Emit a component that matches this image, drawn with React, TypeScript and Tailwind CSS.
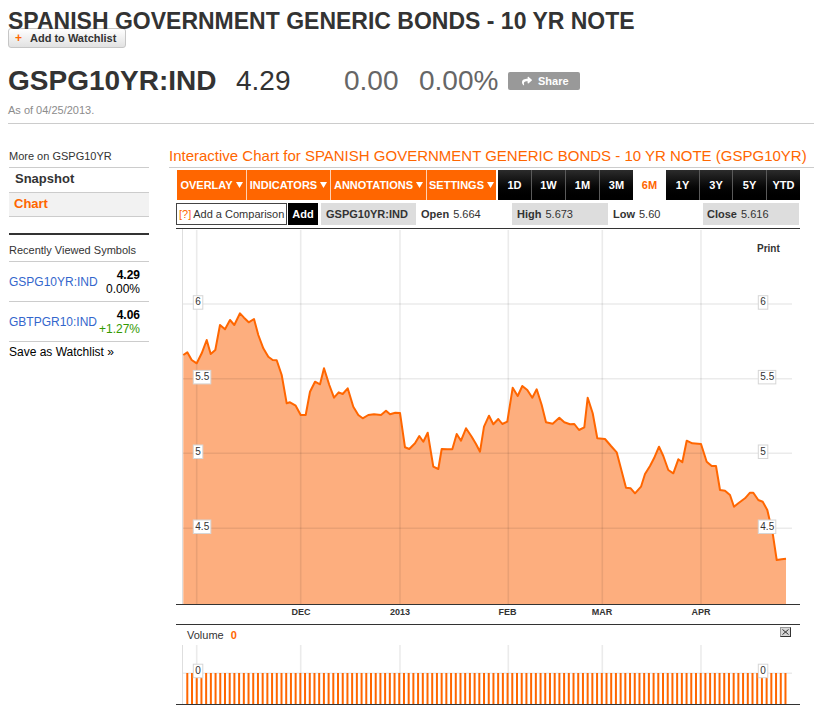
import React from "react";
import { FaShare } from "react-icons/fa";

// price series traced from the 6M chart, in page pixels
const pts: [number, number][] = [
  [183.3, 355], [187.3, 352.3], [191.7, 360], [196.7, 363.3], [201.7, 353.3], [206.7, 340],
  [210.7, 354], [215.3, 350], [220, 325], [225, 329.3], [230, 320], [234.3, 325], [240, 313.3],
  [244, 317.7], [248.7, 322.3], [254, 319], [258.3, 335], [263.3, 348.3], [268.3, 356.7],
  [272.7, 360], [276.7, 360.3], [281.7, 375], [286.7, 403.3], [290, 402.3], [295.7, 405.7],
  [300.7, 415], [305.7, 415], [310, 391.7], [315, 381.7], [320, 384.3], [324, 368.3], [329.3, 385],
  [334, 397.7], [338.7, 392.3], [342.7, 394], [347.7, 388.3], [353.3, 406.7], [358.3, 415],
  [362.7, 418.3], [368.3, 415], [374, 414.3], [381, 415], [386, 410.7], [390, 414.3],
  [395.3, 412.7], [400, 413], [405, 447.3], [409.3, 449], [415, 443.3], [419.3, 436],
  [423.3, 441.7], [427.7, 432.7], [433.3, 466.7], [438.3, 469], [441.7, 449], [447.3, 449.3],
  [452.3, 449.3], [456.7, 434], [461, 440.7], [466, 428.3], [471.7, 436.7], [476, 444],
  [480, 451.7], [484, 426.7], [489, 415.7], [493.3, 424.3], [498.3, 419], [502.3, 424],
  [507.3, 421.7], [512.7, 387.7], [517.7, 396], [522.3, 386], [527.3, 390], [532.3, 397.7],
  [536.7, 389.3], [541.7, 405], [546, 422.3], [552.7, 423.7], [559.3, 417.7], [564.3, 422.3],
  [570, 424.3], [574.3, 424], [579, 430], [584.3, 427.3], [587.7, 397.7], [592.7, 413.3],
  [597.3, 438.3], [605, 439], [611, 446], [616.7, 452.3], [626, 487.7], [630.7, 488.3],
  [635, 493.3], [641, 486.7], [645, 474], [650, 466], [654, 458.3], [659, 446.7], [663.3, 456],
  [668.3, 470], [673.3, 473.3], [678.3, 459.3], [682.3, 462.3], [686.7, 440.7], [692.3, 443.3],
  [701, 444], [706.7, 461.7], [711.7, 466], [716, 466], [720, 490], [725, 490.7], [730, 495],
  [734, 506.7], [738.3, 503.3], [745, 498.3], [750, 492.7], [753.3, 492.7], [758.3, 500],
  [762.7, 501.7], [767.3, 510], [772.7, 533.3], [776.7, 560], [781.7, 559.3], [786, 558.7],
];
const line = pts.map(([x, y]) => `${x},${y}`).join(" ");

const vGrid = [196.7, 300.7, 400, 508.3, 602.3, 701];
const hGrid = [
  { y: 304, label: "6" },
  { y: 378.7, label: "5.5" },
  { y: 453.3, label: "5" },
  { y: 528.3, label: "4.5" },
];
const months = [
  { x: 301, label: "DEC" },
  { x: 400, label: "2013" },
  { x: 507.5, label: "FEB" },
  { x: 602, label: "MAR" },
  { x: 701, label: "APR" },
];
const bars = Array.from({ length: 128 }, (_, i) => 186.3 + i * 4.71);

const orangeBtns = [
  { label: "OVERLAY", cls: "w-[69px]" },
  { label: "INDICATORS", cls: "w-[84px] border-l border-white/70" },
  { label: "ANNOTATIONS", cls: "w-[96px] border-l border-white/70" },
  { label: "SETTINGS", cls: "w-[70px] border-l border-white/70" },
];
const ranges = [
  { label: "1D", cls: "w-[33px]" },
  { label: "1W", cls: "w-[34px] border-l border-[#5a5a5a]" },
  { label: "1M", cls: "w-[34px] border-l border-[#5a5a5a]" },
  { label: "3M", cls: "w-[34px] border-l border-[#5a5a5a]" },
  { label: "6M", cls: "w-[33px]", active: true },
  { label: "1Y", cls: "w-[33px]" },
  { label: "3Y", cls: "w-[33px] border-l border-[#5a5a5a]" },
  { label: "5Y", cls: "w-[34px] border-l border-[#5a5a5a]" },
  { label: "YTD", cls: "w-[34px] border-l border-[#5a5a5a]" },
];

const svgFont = "Liberation Sans, Arial, sans-serif";

function Tag({ x, y, text }: { x: number; y: number; text: string }) {
  const w = text.length > 1 ? 17.5 : 9.5;
  return (
    <g>
      <rect x={x} y={y - 8.3} width={w} height={13.5} fill="#fff" stroke="#d6d6d6" />
      <text x={x + 2} y={y + 1.3} fontSize={10} fill="#333" fontFamily={svgFont}>
        {text}
      </text>
    </g>
  );
}

function Caret() {
  return (
    <svg width="7" height="6" viewBox="0 0 7 6" className="ml-[3px]">
      <path d="M0 0H7L3.5 6Z" fill="#fff" />
    </svg>
  );
}

export default function App() {
  return (
    <div className="w-[814px] h-[710px] overflow-hidden bg-white text-[#333] font-['Liberation_Sans',Arial,sans-serif]">
      {/* header */}
      <div className="pl-[8px]">
        <h1 className="pt-[14px] text-[23px] leading-[15px] font-bold whitespace-nowrap">
          SPANISH GOVERNMENT GENERIC BONDS - 10 YR NOTE
        </h1>
        <button className="-mt-[1px] flex items-center h-[20px] w-[118px] pl-[6px] rounded-[3px] border border-[#c6c6c6] bg-linear-to-b from-white to-[#e2e2e2] text-[11px] font-bold text-[#333]">
          <span className="w-[15px] text-left text-[12px] text-[#ff6600]">+</span>
          Add to Watchlist
        </button>
        <div className="mt-[18px] flex items-center h-[30px] text-[28px] leading-[30px] whitespace-nowrap">
          <span className="w-[228px] font-bold">GSPG10YR:IND</span>
          <span className="w-[108px]">4.29</span>
          <span className="w-[75px] text-[#666]">0.00</span>
          <span className="w-[89px] text-[#666]">0.00%</span>
          <span className="flex items-center h-[18px] w-[72px] pl-[14px] gap-[6px] rounded-[2px] bg-[#999] text-white text-[11px] leading-[18px] font-bold">
            <FaShare size={10} />
            Share
          </span>
        </div>
        <div className="mt-[8px] pb-[6px] border-b border-[#ccc] text-[11px] leading-[13px] text-[#8c8c8c]">
          As of 04/25/2013.
        </div>
      </div>

      <div className="flex">
        {/* sidebar */}
        <div className="ml-[9px] w-[140px] shrink-0">
          <div className="mt-[26px] pb-[4px] border-b border-[#ccc] text-[11px] leading-[13px]">More on GSPG10YR</div>
          <div className="h-[25px] pl-[6px] border-b border-[#ccc] text-[13px] leading-[22px] font-bold">Snapshot</div>
          <div className="h-[24px] pl-[5px] border-b border-[#ccc] bg-[#f2f2f2] text-[13px] leading-[22px] font-bold text-[#ff6600]">
            Chart
          </div>
          <div className="mt-[16px] border-t-2 border-[#333]" />
          <div className="mt-[9px] pb-[4px] border-b border-[#ccc] text-[11px] leading-[13px]">Recently Viewed Symbols</div>
          <div className="h-[40px] flex items-center justify-between pr-[9px] border-b border-[#ccc]">
            <span className="text-[12px] leading-[14px] text-[#3366cc]">GSPG10YR:IND</span>
            <div className="text-right text-[12px] leading-[14px]">
              <div className="font-bold text-black">4.29</div>
              <div className="text-black">0.00%</div>
            </div>
          </div>
          <div className="h-[40px] flex items-center justify-between pr-[9px] border-b border-[#ccc]">
            <span className="text-[12px] leading-[14px] text-[#3366cc]">GBTPGR10:IND</span>
            <div className="text-right text-[12px] leading-[14px]">
              <div className="font-bold text-black">4.06</div>
              <div className="text-[#339900]">+1.27%</div>
            </div>
          </div>
          <div className="mt-[3px] text-[12px] leading-[14px] text-black">Save as Watchlist »</div>
        </div>

        {/* main */}
        <div className="ml-[20px] w-[645px]">
          <div className="mt-[23px] pb-[2px] border-b border-[#ccc] text-[15px] leading-[18px] text-[#ff6600] whitespace-nowrap">
            Interactive Chart for SPANISH GOVERNMENT GENERIC BONDS - 10 YR NOTE (GSPG10YR)
          </div>

          {/* toolbar */}
          <div className="mt-[2px] ml-[8px] flex h-[30px] text-[11px] font-bold text-white">
            {orangeBtns.map((b) => (
              <div key={b.label} className={`${b.cls} flex items-center justify-center bg-[#ff6600]`}>
                {b.label}
                <Caret />
              </div>
            ))}
            <div className="ml-[2px] flex">
              {ranges.map((r) =>
                r.active ? (
                  <div key={r.label} className={`${r.cls} flex items-center justify-center bg-white text-[#ff6600]`}>
                    {r.label}
                  </div>
                ) : (
                  <div
                    key={r.label}
                    className={`${r.cls} flex items-center justify-center bg-linear-to-b from-[#2c2c2c] to-black`}
                  >
                    {r.label}
                  </div>
                )
              )}
            </div>
          </div>

          {/* stats row */}
          <div className="mt-[3px] ml-[7px] flex h-[22px] text-[11px] whitespace-nowrap">
            <div className="w-[111px] flex items-center pl-[2px] border border-[#444]">
              <span className="text-[#ff6600] mr-[2px]">[?]</span>
              Add a Comparison
            </div>
            <div className="ml-[1px] w-[30px] flex items-center justify-center bg-black text-white font-bold">Add</div>
            <div className="ml-[3px] w-[95px] flex items-center pl-[5px] bg-[#ddd] font-bold">GSPG10YR:IND</div>
            <div className="ml-[1px] w-[95px] flex items-center pl-[4px]">
              <b className="mr-[4px]">Open</b>5.664
            </div>
            <div className="w-[96px] flex items-center pl-[5px] bg-[#ddd]">
              <b className="mr-[4px]">High</b>5.673
            </div>
            <div className="w-[95px] flex items-center pl-[5px]">
              <b className="mr-[4px]">Low</b>5.60
            </div>
            <div className="w-[96px] flex items-center pl-[4px] bg-[#ddd]">
              <b className="mr-[4px]">Close</b>5.616
            </div>
          </div>

          {/* price chart */}
          <div className="mt-[3px] ml-[7px] w-[624px] border-t border-b border-[#333]">
            <svg width={624} height={375} viewBox="176 229 624 375" className="block">
              <line x1={182.5} y1={229} x2={182.5} y2={604} stroke="#dedede" />
              <polygon points={`${line} 786,604 183.3,604`} fill="#fdae7e" />
              {vGrid.map((x) => (
                <line key={x} x1={x} y1={230} x2={x} y2={604} stroke="rgba(0,0,0,0.08)" strokeWidth={1.6} />
              ))}
              {hGrid.map((g) => (
                <line key={g.y} x1={183} y1={g.y} x2={792} y2={g.y} stroke="rgba(0,0,0,0.08)" strokeWidth={1.6} />
              ))}
              <polyline points={line} fill="none" stroke="#ff6600" strokeWidth={2} strokeLinejoin="round" />
              {hGrid.map((g) => (
                <g key={g.label}>
                  <Tag x={193.3} y={g.y} text={g.label} />
                  <Tag x={758.3} y={g.y} text={g.label} />
                </g>
              ))}
              <text x={757} y={251.5} fontSize={10} fontWeight="bold" fill="#333" fontFamily={svgFont}>
                Print
              </text>
            </svg>
          </div>
          <div className="ml-[7px] w-[624px] border-b border-[#333]">
            <svg width={624} height={19} viewBox="176 605 624 19" className="block">
              {months.map((m) => (
                <text
                  key={m.label}
                  x={m.x}
                  y={615.3}
                  fontSize={9}
                  fontWeight="bold"
                  textAnchor="middle"
                  fill="#333"
                  fontFamily={svgFont}
                >
                  {m.label}
                </text>
              ))}
            </svg>
          </div>

          {/* volume */}
          <div className="ml-[7px] w-[624px] h-[20px] flex items-start justify-between pl-[11px] pr-[9px]">
            <div className="text-[11px] leading-[20px]">
              Volume <span className="ml-[4px] font-bold text-[#ff6600]">0</span>
            </div>
            <div className="mt-[2px] w-[11px] h-[10px] flex items-center justify-center bg-[#d6d6d6] border border-t-[#999] border-l-[#999] border-r-[#333] border-b-[#333]">
              <svg width="7" height="6" viewBox="0 0 7 6">
                <path d="M0.5 0.5L6.5 5.5M6.5 0.5L0.5 5.5" stroke="#333" strokeWidth="1" />
              </svg>
            </div>
          </div>
          <div className="ml-[7px] w-[624px] border-b border-[#333]">
            <svg width={624} height={59} viewBox="176 645 624 59" className="block">
              <line x1={182.5} y1={645} x2={182.5} y2={704} stroke="#dedede" />
              {vGrid.map((x) => (
                <line key={x} x1={x} y1={645} x2={x} y2={704} stroke="rgba(0,0,0,0.08)" strokeWidth={1.6} />
              ))}
              <line x1={183} y1={673.3} x2={792} y2={673.3} stroke="rgba(0,0,0,0.08)" strokeWidth={1.6} />
              {bars.map((x) => (
                <rect key={x} x={x} y={673} width={2} height={31} fill="#ff6600" />
              ))}
              <Tag x={193.3} y={672.5} text="0" />
              <Tag x={758.3} y={672.5} text="0" />
            </svg>
          </div>
        </div>
      </div>
    </div>
  );
}
